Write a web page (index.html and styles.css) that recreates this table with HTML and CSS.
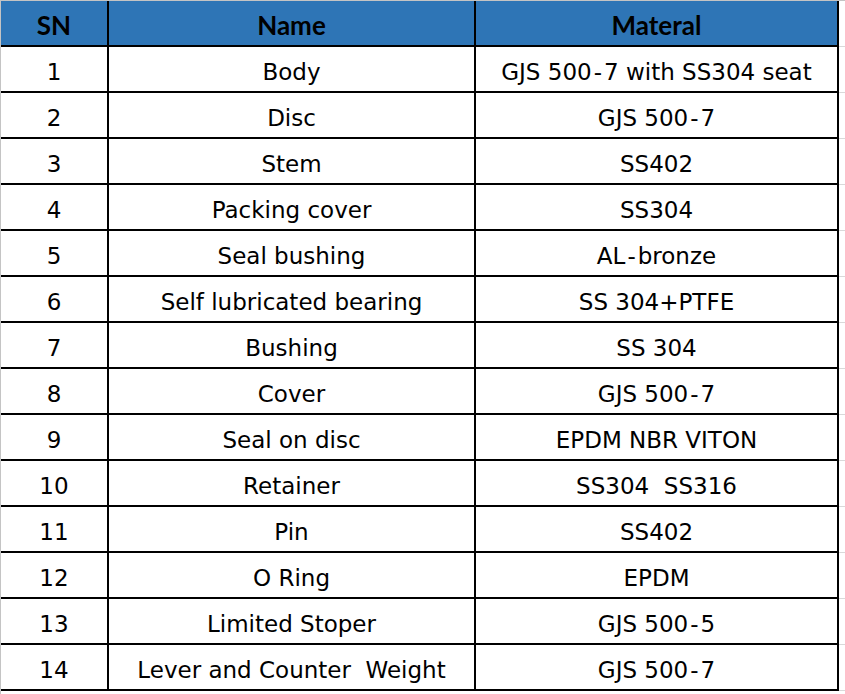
FILE: index.html
```html
<!DOCTYPE html>
<html>
<head>
<meta charset="utf-8">
<link rel="stylesheet" href="styles.css">
</head>
<body>
<div class="sheet">
  <div class="grid">
    <div class="cell head">SN</div>
    <div class="cell head">Name</div>
    <div class="cell head">Materal</div>

    <div class="cell">1</div><div class="cell">Body</div><div class="cell">GJS 500<span class="dash">-</span>7 with SS304 seat</div>
    <div class="cell">2</div><div class="cell">Disc</div><div class="cell">GJS 500<span class="dash">-</span>7</div>
    <div class="cell">3</div><div class="cell">Stem</div><div class="cell">SS402</div>
    <div class="cell">4</div><div class="cell">Packing cover</div><div class="cell">SS304</div>
    <div class="cell">5</div><div class="cell">Seal bushing</div><div class="cell">AL<span class="dash">-</span>bronze</div>
    <div class="cell">6</div><div class="cell">Self lubricated bearing</div><div class="cell">SS 304+PTFE</div>
    <div class="cell">7</div><div class="cell">Bushing</div><div class="cell">SS 304</div>
    <div class="cell">8</div><div class="cell">Cover</div><div class="cell">GJS 500<span class="dash">-</span>7</div>
    <div class="cell">9</div><div class="cell">Seal on disc</div><div class="cell">EPDM NBR VITON</div>
    <div class="cell sel">10</div><div class="cell">Retainer</div><div class="cell">SS304  SS316</div>
    <div class="cell">11</div><div class="cell">Pin</div><div class="cell">SS402</div>
    <div class="cell">12</div><div class="cell">O Ring</div><div class="cell">EPDM</div>
    <div class="cell">13</div><div class="cell">Limited Stoper</div><div class="cell">GJS 500<span class="dash">-</span>5</div>
    <div class="cell">14</div><div class="cell">Lever and Counter  Weight</div><div class="cell">GJS 500<span class="dash">-</span>7</div>
  </div>
</div>
</body>
</html>
```
FILE: styles.css
```css
html, body {
  margin: 0;
  padding: 0;
  background: #ffffff;
}
.sheet {
  width: 845px;
  height: 694px;
  box-sizing: border-box;
  border-top: 1px solid #c4c4c4;
  border-left: 1px solid #c4c4c4;
  background-image: repeating-linear-gradient(to bottom, transparent 0, transparent 45px, #d9d9d9 45px, #d9d9d9 46px);
  background-position: 0 0;
  overflow: hidden;
}
.grid {
  display: grid;
  grid-template-columns: 108px 367px 363px;
  grid-auto-rows: 46px;
  width: 838px;
  background: #ffffff;
}
.cell {
  box-sizing: border-box;
  border-right: 2px solid #000;
  border-bottom: 2px solid #000;
  display: flex;
  align-items: center;
  justify-content: center;
  padding-top: 6px;
  font-family: "DejaVu Sans", sans-serif;
  font-size: 23px;
  color: #000;
  white-space: pre;
}
.dash {
  margin: 0 2px;
}
.head {
  background: #2e75b6;
  font-family: "Lato", sans-serif;
  font-weight: 700;
  font-size: 26px;
  padding-top: 4px;
}
.sel {
  box-shadow: -2px 0 0 #217346;
}
```
